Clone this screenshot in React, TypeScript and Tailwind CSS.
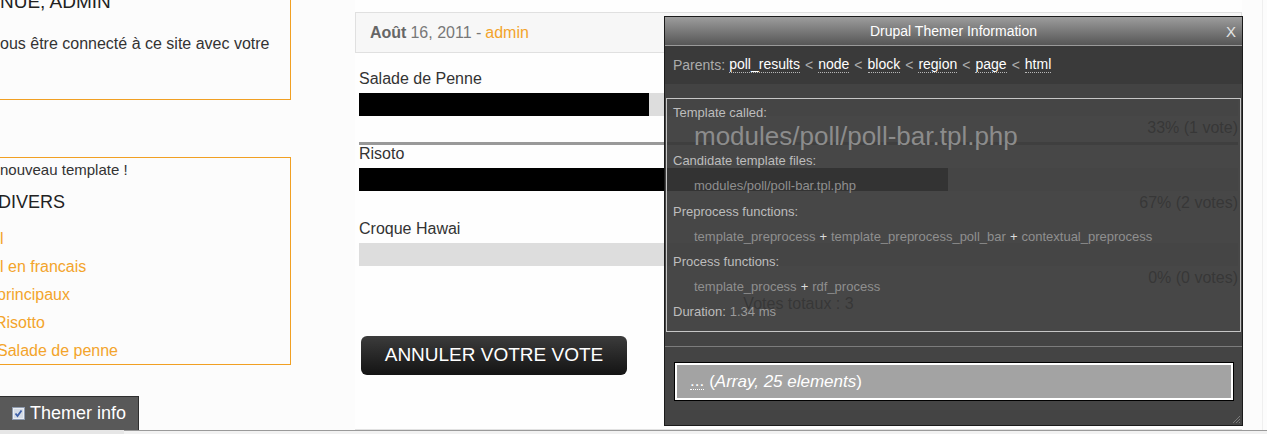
import React from "react";

type PollChoice = {
  label: string;
  percent: number;
  result: string;
  selected?: boolean;
};

const choices: PollChoice[] = [
  { label: "Salade de Penne", percent: 33, result: "33% (1 vote)", selected: true },
  { label: "Risoto", percent: 67, result: "67% (2 votes)" },
  { label: "Croque Hawai", percent: 0, result: "0% (0 votes)" },
];

const parents = ["poll_results", "node", "block", "region", "page", "html"];

function PollBar({ choice }: { choice: PollChoice }) {
  return (
    <div className="h-[75px] text-[16px] leading-[20px] text-[#333]">
      <div>{choice.label}</div>
      <div className="mt-[4px] h-[23px] bg-[#dddddd]">
        <div className="h-full bg-black" style={{ width: `${choice.percent}%` }} />
      </div>
      <div className="mt-[2px] text-right">{choice.result}</div>
      {choice.selected ? <div className="mt-[4px] h-[3px] bg-[#999999]" /> : null}
    </div>
  );
}

function ThemerCheckbox() {
  return (
    <svg width="13" height="13" viewBox="0 0 13 13">
      <rect x="0.5" y="0.5" width="12" height="12" fill="#e9edf3" stroke="#8e9aae" />
      <rect x="2" y="2" width="9" height="9" fill="#d4dbe6" />
      <path d="M3.5 6.5 L5.5 9 L9.5 3.5" fill="none" stroke="#3d5fa8" strokeWidth="1.8" />
    </svg>
  );
}

function InfoLabel({ children, h }: { children: React.ReactNode; h: string }) {
  return <div className={`${h} flex items-center text-[13px] text-[#bdbdbd]`}>{children}</div>;
}

function InfoValue({ children, h }: { children: React.ReactNode; h: string }) {
  return <div className={`${h} flex items-center pl-[21px] text-[13px] text-[#8f8f8f]`}>{children}</div>;
}

function Plus() {
  return <span className="mx-[4px] text-[#dcdcdc]">+</span>;
}

function ThemerPanel() {
  return (
    <div className="absolute left-[664px] top-[16px] flex h-[410px] w-[579px] flex-col border border-[#1b1b1b]">
      <div className="relative flex h-[29px] items-center justify-center border-b border-[#9a9a9a] bg-gradient-to-b from-[#9d9d9d] to-[#575757] text-[14px] text-white">
        Drupal Themer Information
        <span className="absolute right-[6px] top-[4px] text-[15px] text-[#e4e4e4]">X</span>
      </div>
      <div className="flex h-[38px] items-center bg-[#3a3a3a] px-[8px] text-[14px] text-[#acacac]">
        <span className="mr-[4px]">Parents:</span>
        {parents.map((p, i) => (
          <span key={p} className="flex items-center">
            <span className="border-b border-dotted border-[#b8b8b8] leading-[15px] text-white">{p}</span>
            {i < parents.length - 1 ? <span className="mx-[5px]">&lt;</span> : null}
          </span>
        ))}
      </div>
      <div className="h-[14px] bg-[#434343]" />
      <div className="h-[234px] border-x border-[#444444]">
        <div className="h-full border border-[#c6c6c6] bg-[rgba(55,55,55,0.92)] pl-[6px] pt-[1px]">
          <InfoLabel h="h-[25px]">Template called:</InfoLabel>
          <div className="flex h-[23px] items-center pl-[21px] text-[26px] text-[#8c8c8c]">modules/poll/poll-bar.tpl.php</div>
          <InfoLabel h="h-[25px]">Candidate template files:</InfoLabel>
          <InfoValue h="h-[26px]">modules/poll/poll-bar.tpl.php</InfoValue>
          <InfoLabel h="h-[26px]">Preprocess functions:</InfoLabel>
          <InfoValue h="h-[24px]">
            template_preprocess
            <Plus />
            template_preprocess_poll_bar
            <Plus />
            contextual_preprocess
          </InfoValue>
          <InfoLabel h="h-[25px]">Process functions:</InfoLabel>
          <InfoValue h="h-[25px]">
            template_process
            <Plus />
            rdf_process
          </InfoValue>
          <InfoLabel h="h-[25px]">
            Duration:<span className="ml-[4px] text-[#9a9a9a]">1.34 ms</span>
          </InfoLabel>
        </div>
      </div>
      <div className="h-[14px] bg-[#444444]" />
      <div className="h-px bg-[#7c7c7c]" />
      <div className="relative flex-1 bg-[#444444] px-[9px] pt-[15px]">
        <div className="h-[39px] w-[560px] border border-black">
          <div className="flex h-full items-center border-2 border-white bg-[#a3a3a3] pl-[13px] text-[17px] text-white">
            <span className="border-b border-dotted border-white leading-[16px]">...</span>
            <span className="ml-[5px]">
              (<i>Array, 25 elements</i>)
            </span>
          </div>
        </div>
        <svg className="absolute bottom-[1px] right-[1px]" width="10" height="10" viewBox="0 0 10 10">
          <path d="M9 2 L2 9 M9 5 L5 9 M9 8 L8 9" stroke="#7a7a7a" strokeWidth="1" />
        </svg>
      </div>
    </div>
  );
}

export default function App() {
  return (
    <div className="relative flex h-[434px] w-[1267px] flex-col overflow-hidden bg-[#fcfcfc] font-['Liberation_Sans',Arial,sans-serif]">
      <div className="flex h-[430px]">
        <aside className="flex w-[291px] shrink-0 flex-col">
          <div className="h-[100px] border-b border-r border-[#f1a023]">
            <div className="mt-[-10px] h-[24px] text-[19px] leading-[24px] text-[#222]">NUE, ADMIN</div>
            <div className="mt-[20px] text-[16px] leading-[20px] text-[#333]">ous être connecté à ce site avec votre</div>
          </div>
          <div className="mt-[57px] h-[208px] border-y border-r border-[#f1a023] pt-[2px]">
            <div className="text-[15px] leading-[20px] text-[#333]">nouveau template !</div>
            <div className="ml-[-2px] mt-[10px] text-[18px] leading-[24px] text-[#222]">DIVERS</div>
            <ul className="mt-[11px] text-[16px] leading-[28px] text-[#f3a42b]">
              <li>l</li>
              <li>l en francais</li>
              <li className="ml-[-3px]">principaux</li>
              <li className="ml-[-5px]">Risotto</li>
              <li className="ml-[-3px]">Salade de penne</li>
            </ul>
          </div>
          <div className="mt-[31px] flex h-[34px] w-[139px] items-center gap-[5px] border-r border-t border-[#2e2e2e] bg-[#595959] pl-[12px] text-[18px] text-white">
            <ThemerCheckbox />
            <span>Themer info</span>
          </div>
        </aside>

        <main className="ml-[64px] w-[887px] shrink-0 border-b border-[#e2e2e2] bg-[#fefefe]">
          <div className="mt-[12px] flex h-[41px] items-center border border-[#e0e0e0] bg-[#f7f7f7] pl-[14px] text-[16px] text-[#777]">
            <b className="text-[#666]">Août</b>
            <span className="ml-[4px]">16, 2011 -</span>
            <span className="ml-[4px] text-[#f3a42b]">admin</span>
          </div>
          <div className="ml-[4px] mt-[16px] w-[879px]">
            {choices.map((c) => (
              <PollBar key={c.label} choice={c} />
            ))}
            <div className="text-center text-[16px] leading-[20px] text-[#333]">Votes totaux : 3</div>
            <button
              type="button"
              className="ml-[2px] mt-[22px] h-[39px] w-[266px] rounded-[6px] bg-gradient-to-b from-[#3c3c3c] to-[#141414] text-[19px] text-white"
            >
              ANNULER VOTRE VOTE
            </button>
          </div>
        </main>

        <div className="ml-[20px] h-full w-px bg-[#efefef]" />
      </div>
      <div className="flex flex-1">
        <div className="w-[124px] bg-[#e6e6e6]" />
        <div className="flex-1 border-t border-[#9a9a9a] bg-[#f2f2f2]" />
      </div>
      <ThemerPanel />
    </div>
  );
}
